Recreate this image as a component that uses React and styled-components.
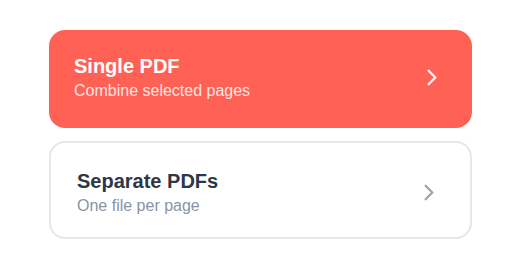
import React from "react";
import styled, { createGlobalStyle } from "styled-components";

const GlobalStyle = createGlobalStyle`
  body {
    margin: 0;
    background: #ffffff;
    font-family: "Liberation Sans", Arial, sans-serif;
  }
`;

const List = styled.div`
  width: 423px;
  margin: 30px 0 0 49px;
  display: flex;
  flex-direction: column;
  gap: 13px;
`;

const Card = styled.button`
  display: flex;
  align-items: center;
  justify-content: space-between;
  box-sizing: border-box;
  width: 100%;
  height: 98px;
  padding: ${(p) => (p.$active ? "0 27px 4px 23px" : "4px 30px 0 26px")};
  border-radius: 16px;
  border: 2px solid ${(p) => (p.$active ? "#ff6255" : "#e5e7eb")};
  background: ${(p) => (p.$active ? "#ff6255" : "#ffffff")};
  font-family: "Liberation Sans", Arial, sans-serif;
  text-align: left;
  cursor: pointer;
`;

const Text = styled.div`
  display: flex;
  flex-direction: column;
  gap: 3px;
`;

const Title = styled.span`
  font-size: 20px;
  font-weight: 700;
  line-height: 24px;
  color: ${(p) => (p.$active ? "#ffffff" : "#2d3748")};
`;

const Subtitle = styled.span`
  font-size: 16px;
  line-height: 20px;
  color: ${(p) => (p.$active ? "rgba(255,255,255,0.85)" : "#8a93a3")};
`;

const Chevron = ({ color }) => (
  <svg width="23" height="23" viewBox="0 0 24 24" fill="none" stroke={color} strokeWidth="2.4" strokeLinecap="round" strokeLinejoin="round">
    <polyline points="9 5 16 12 9 19" />
  </svg>
);

const options = [
  { title: "Single PDF", subtitle: "Combine selected pages", active: true },
  { title: "Separate PDFs", subtitle: "One file per page", active: false },
];

export default function App() {
  return (
    <>
      <GlobalStyle />
      <List>
        {options.map((o) => (
          <Card key={o.title} $active={o.active}>
            <Text>
              <Title $active={o.active}>{o.title}</Title>
              <Subtitle $active={o.active}>{o.subtitle}</Subtitle>
            </Text>
            <Chevron color={o.active ? "#ffffff" : "#9ca3af"} />
          </Card>
        ))}
      </List>
    </>
  );
}
